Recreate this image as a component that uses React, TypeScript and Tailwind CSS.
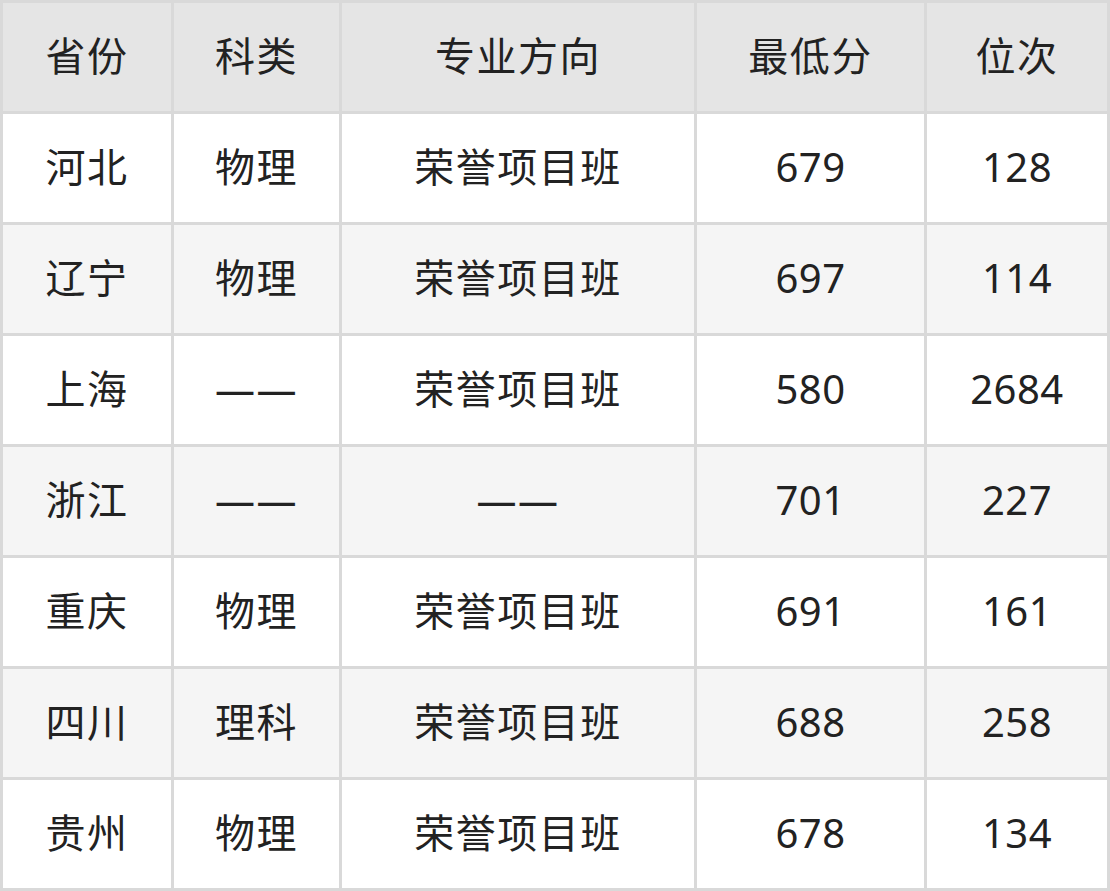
const header = ['省份', '科类', '专业方向', '最低分', '位次']

const rows: string[][] = [
  ['河北', '物理', '荣誉项目班', '679', '128'],
  ['辽宁', '物理', '荣誉项目班', '697', '114'],
  ['上海', '——', '荣誉项目班', '580', '2684'],
  ['浙江', '——', '——', '701', '227'],
  ['重庆', '物理', '荣誉项目班', '691', '161'],
  ['四川', '理科', '荣誉项目班', '688', '258'],
  ['贵州', '物理', '荣誉项目班', '678', '134'],
]

export default function App() {
  return (
    <div
      className="w-[1110px] h-[891px] bg-[#d9d9d9] p-[3px] grid grid-cols-[168px_165px_352px_227px_180px] auto-rows-[108px] gap-[3px] text-[40px] text-[#222222]"
      style={{ fontFamily: '"Noto Sans", "Noto Sans CJK SC", sans-serif' }}
    >
      {header.map((h) => (
        <div key={h} className="bg-[#e5e5e5] flex items-center justify-center pb-[2px] tracking-[1.5px]">
          {h}
        </div>
      ))}
      {rows.map((row, i) =>
        row.map((cell, j) => (
          <div
            key={`${i}-${j}`}
            className={`flex items-center justify-center pb-[2px] ${
              j >= 3 ? 'tracking-[0.5px]' : 'tracking-[1.5px]'
            } ${i % 2 === 0 ? 'bg-white' : 'bg-[#f5f5f5]'}`}
          >
            {cell}
          </div>
        ))
      )}
    </div>
  )
}
